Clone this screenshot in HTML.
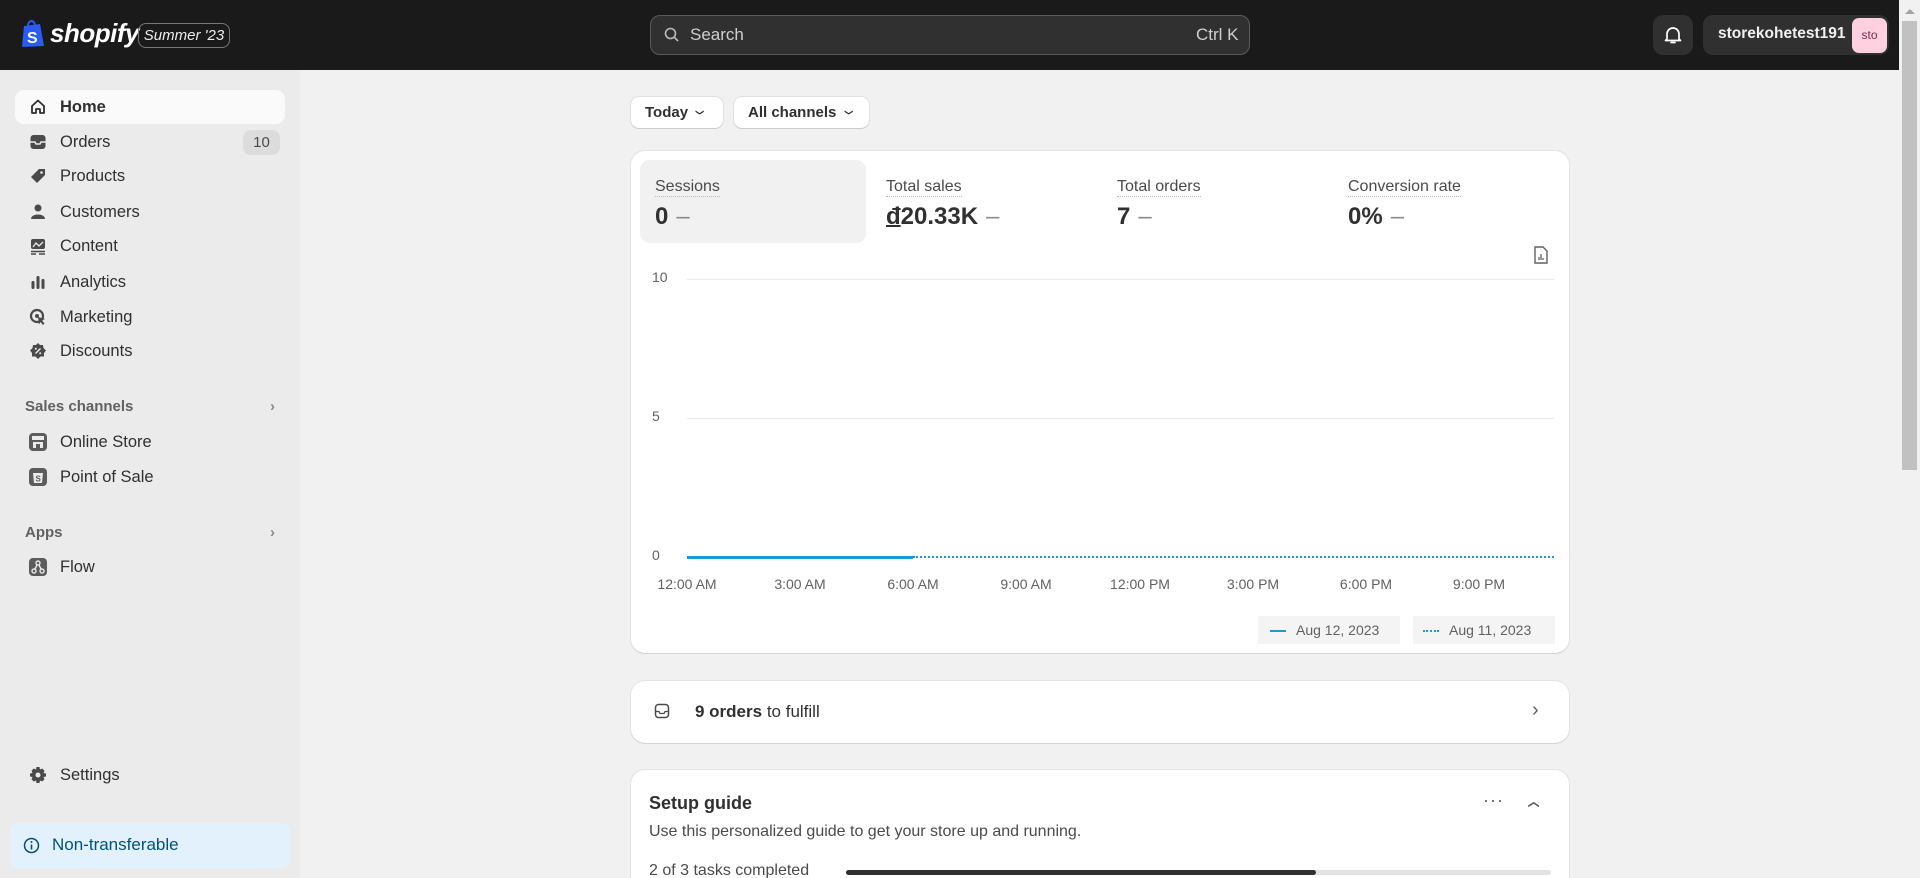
<!DOCTYPE html>
<html style="overflow:hidden;width:1920px;height:878px"><head><meta charset="utf-8"><style>
*{box-sizing:border-box;margin:0;padding:0}
body{width:1920px;height:878px;overflow:hidden;background:#f1f1f1;font-family:"Liberation Sans",sans-serif;color:#303030;position:relative}
.abs{position:absolute}
.top{left:0;top:0;width:1899px;height:70px;background:#1a1a1a}
.side{left:0;top:70px;width:300px;height:808px;background:#ebebeb}
.nav{position:absolute;left:15px;width:270px;height:34px;display:flex;align-items:center;font-size:16.5px;font-weight:bold;color:#303030}
.nav .ic{width:20px;height:20px;margin-left:13px;margin-right:12px;display:flex;align-items:center;justify-content:center}
.sec{position:absolute;left:25px;font-size:15px;font-weight:bold;color:#616161}
.chev{position:absolute;right:0;color:#8a8a8a}
.card{position:absolute;left:631px;width:938px;background:#fff;border-radius:14px;box-shadow:0 1px 0 #d4d4d4,0 0 0 1px #e3e3e3}
.lbl{position:absolute;top:178px;font-size:16px;color:#4a4a4a;border-bottom:1.5px dotted #bbb;line-height:18px}
.val{position:absolute;top:203px;font-size:24px;font-weight:bold;color:#303030}
.val span{color:#8a8a8a;font-weight:normal;margin-left:8px}
.xl{position:absolute;top:576px;font-size:14px;color:#616161;transform:translateX(-50%)}
.yl{position:absolute;left:652px;font-size:14px;color:#616161}
.grid{position:absolute;left:687px;width:867px;height:1px;background:#ebebeb}
</style></head><body>
<div class="abs top"></div>
<svg class="abs" style="left:20px;top:18px" width="26" height="30" viewBox="0 0 26 30"><path d="M4 8 L20 6 L24 28 L2 29 Z" fill="#2a5cf5"/><path d="M8 8 C8 2 14 1 15 7" stroke="#2a5cf5" stroke-width="2" fill="none"/><text x="7" y="25" font-size="16" font-weight="bold" fill="#fff" font-family="Liberation Sans">S</text></svg>
<div class="abs" style="left:50px;top:18px;font-size:26px;font-weight:bold;font-style:italic;color:#fff;letter-spacing:-0.5px">shopify</div>
<div class="abs" style="left:138px;top:23px;width:92px;height:25px;border:1px solid #777;border-radius:8px;color:#eee;font-style:italic;font-size:15px;text-align:center;line-height:23px">Summer '23</div>
<div class="abs" style="left:650px;top:15px;width:600px;height:40px;background:#303030;border:1px solid #5a5a5a;border-radius:10px"></div>
<svg class="abs" style="left:664px;top:27px" width="16" height="16" viewBox="0 0 16 16"><circle cx="6.5" cy="6.5" r="5" stroke="#bbb" stroke-width="1.6" fill="none"/><path d="M10.5 10.5 L14 14" stroke="#bbb" stroke-width="1.6"/></svg>
<div class="abs" style="left:690px;top:25px;font-size:17px;color:#cfcfcf">Search</div>
<div class="abs" style="left:1196px;top:25px;font-size:17px;color:#cfcfcf">Ctrl K</div>
<div class="abs" style="left:1653px;top:15px;width:40px;height:40px;background:#303030;border-radius:10px"></div>
<svg class="abs" style="left:1664px;top:25px" width="18" height="20" viewBox="0 0 18 20"><path d="M3 14 V9 a6 6 0 0 1 12 0 V14 L16.5 15.5 H1.5 Z" stroke="#fff" stroke-width="1.7" fill="none" stroke-linejoin="round"/><path d="M7 17.5 h4" stroke="#fff" stroke-width="1.7" stroke-linecap="round"/></svg>
<div class="abs" style="left:1703px;top:15px;width:186px;height:40px;background:#303030;border-radius:10px"></div>
<div class="abs" style="left:1718px;top:25px;font-size:15.5px;font-weight:bold;color:#f1f1f1">storekohetest191</div>
<div class="abs" style="left:1852px;top:18px;width:35px;height:35px;background:#ffd0e0;border-radius:7px;font-size:12px;color:#7a2a4a;text-align:center;line-height:35px">sto</div>
<div class="abs" style="left:1899px;top:0;width:21px;height:878px;background:#f1f1f1"></div>
<div class="abs" style="left:1905px;top:9px;width:0;height:0;border-left:5px solid transparent;border-right:5px solid transparent;border-bottom:5px solid #a3a3a3"></div>
<div class="abs" style="left:1902px;top:21px;width:15px;height:449px;background:#c1c1c1"></div>

<div class="abs side"></div>
<div class="nav" style="top:90px;background:#fafafa;border-radius:9px"><span class="ic"><svg width="18" height="18" viewBox="0 0 18 18"><path d="M3 8 L9 2.5 L15 8 V15 H11 V11 H7 V15 H3 Z" stroke="#303030" stroke-width="1.8" fill="none" stroke-linejoin="round"/></svg></span>Home</div>
<div class="nav" style="top:125px;font-weight:normal"><span class="ic"><svg width="18" height="18" viewBox="0 0 18 18"><rect x="1.5" y="2" width="15" height="14" rx="3" fill="#4a4a4a"/><path d="M1.5 9 H6 L7 11 H11 L12 9 H16.5" stroke="#ebebeb" stroke-width="1.5" fill="none"/></svg></span>Orders<span style="position:absolute;right:5px;background:#dcdcdc;border-radius:8px;width:37px;height:25px;text-align:center;line-height:25px;font-size:15px;color:#4a4a4a">10</span></div>
<div class="nav" style="top:159px;font-weight:normal"><span class="ic"><svg width="18" height="18" viewBox="0 0 18 18"><path d="M10 2 H16 V8 L8 16 L2 10 Z" fill="#4a4a4a"/><circle cx="12.5" cy="5.5" r="1.3" fill="#ebebeb"/></svg></span>Products</div>
<div class="nav" style="top:195px;font-weight:normal"><span class="ic"><svg width="18" height="18" viewBox="0 0 18 18"><circle cx="9" cy="5" r="3.5" fill="#4a4a4a"/><path d="M2 16 C2 10 16 10 16 16 Z" fill="#4a4a4a"/></svg></span>Customers</div>
<div class="nav" style="top:229px;font-weight:normal"><span class="ic"><svg width="18" height="18" viewBox="0 0 18 18"><rect x="2" y="2" width="14" height="10" rx="2" fill="#4a4a4a"/><path d="M4 10 L7 6 L10 9 L14 5" stroke="#ebebeb" stroke-width="1.3" fill="none"/><path d="M2 14.5 H16 M2 17 H7 M10 17 H16" stroke="#4a4a4a" stroke-width="1.4"/></svg></span>Content</div>
<div class="nav" style="top:265px;font-weight:normal"><span class="ic"><svg width="18" height="18" viewBox="0 0 18 18"><rect x="2.5" y="8" width="3" height="8" rx="1.2" fill="#4a4a4a"/><rect x="7.5" y="3" width="3" height="13" rx="1.2" fill="#4a4a4a"/><rect x="12.5" y="6" width="3" height="10" rx="1.2" fill="#4a4a4a"/></svg></span>Analytics</div>
<div class="nav" style="top:300px;font-weight:normal"><span class="ic"><svg width="18" height="18" viewBox="0 0 18 18"><circle cx="8" cy="8" r="6" stroke="#4a4a4a" stroke-width="2.2" fill="none"/><circle cx="8" cy="8" r="2" fill="#4a4a4a"/><path d="M9 9 L16 11 L13 12.5 L15.5 15.5 L14 17 L11.5 14 L10 16.5 Z" fill="#4a4a4a"/></svg></span>Marketing</div>
<div class="nav" style="top:334px;font-weight:normal"><span class="ic"><svg width="18" height="18" viewBox="0 0 18 18"><path d="M9 1 L11 3 L14 3 L14.5 6 L17 8.5 L15 11 L15 14.5 L11.5 14.5 L9 17 L6.5 14.5 L3 14.5 L3 11 L1 8.5 L3.5 6 L4 3 L7 3 Z" fill="#4a4a4a"/><path d="M6.5 11.5 L11.5 6.5" stroke="#ebebeb" stroke-width="1.4"/><circle cx="6.8" cy="6.8" r="1" fill="#ebebeb"/><circle cx="11.2" cy="11.2" r="1" fill="#ebebeb"/></svg></span>Discounts</div>
<div class="sec" style="top:398px;width:250px">Sales channels<span class="chev">›</span></div>
<div class="nav" style="top:425px;font-weight:normal"><span class="ic"><svg width="20" height="20" viewBox="0 0 20 20"><rect x="1" y="1" width="18" height="18" rx="4" fill="#5c5c5c"/><rect x="4" y="4" width="12" height="4" fill="#ebebeb"/><rect x="5" y="10" width="10" height="6" fill="#ebebeb"/><rect x="8" y="12" width="4" height="4" fill="#5c5c5c"/></svg></span>Online Store</div>
<div class="nav" style="top:460px;font-weight:normal"><span class="ic"><svg width="20" height="20" viewBox="0 0 20 20"><rect x="1" y="1" width="18" height="18" rx="4" fill="#5c5c5c"/><path d="M5 6 H15 L14 16 H6 Z" fill="#ebebeb"/><text x="7.5" y="14.5" font-size="8" font-weight="bold" fill="#5c5c5c" font-family="Liberation Sans">S</text></svg></span>Point of Sale</div>
<div class="sec" style="top:524px;width:250px">Apps<span class="chev">›</span></div>
<div class="nav" style="top:550px;font-weight:normal"><span class="ic"><svg width="20" height="20" viewBox="0 0 20 20"><rect x="1" y="1" width="18" height="18" rx="4" fill="#5c5c5c"/><circle cx="10" cy="6" r="2" stroke="#ebebeb" stroke-width="1.4" fill="none"/><circle cx="6" cy="14" r="2" stroke="#ebebeb" stroke-width="1.4" fill="none"/><circle cx="14" cy="14" r="2" stroke="#ebebeb" stroke-width="1.4" fill="none"/><path d="M9 8 L7 12 M11 8 L13 12" stroke="#ebebeb" stroke-width="1.4"/></svg></span>Flow</div>
<div class="nav" style="top:758px;font-weight:normal"><span class="ic"><svg width="18" height="18" viewBox="0 0 18 18"><path d="M7.5 1 H10.5 L11 3.5 L13.2 2.5 L15.5 4.8 L14.5 7 L17 7.5 V10.5 L14.5 11 L15.5 13.2 L13.2 15.5 L11 14.5 L10.5 17 H7.5 L7 14.5 L4.8 15.5 L2.5 13.2 L3.5 11 L1 10.5 V7.5 L3.5 7 L2.5 4.8 L4.8 2.5 L7 3.5 Z" fill="#4a4a4a"/><circle cx="9" cy="9" r="2.5" fill="#ebebeb"/></svg></span>Settings</div>
<div class="abs" style="left:10px;top:823px;width:280px;height:45px;background:#e3f1fc;border-radius:9px"></div>
<svg class="abs" style="left:23px;top:837px" width="17" height="17" viewBox="0 0 17 17"><circle cx="8.5" cy="8.5" r="7" stroke="#00527c" stroke-width="1.5" fill="none"/><path d="M8.5 7.5 V12.5" stroke="#00527c" stroke-width="1.6"/><circle cx="8.5" cy="5" r="1" fill="#00527c"/></svg>
<div class="abs" style="left:52px;top:835px;font-size:17px;color:#00527c">Non-transferable</div>

<div class="abs" style="left:631px;top:97px;width:92px;height:31px;background:#fff;border-radius:8px;box-shadow:0 1px 0 #ccc,0 0 0 1px #e0e0e0;font-size:15px;font-weight:bold;line-height:31px;padding-left:14px">Today <span style="font-weight:normal;display:inline-block;transform:scaleX(1.4) rotate(90deg);margin-left:6px">›</span></div>
<div class="abs" style="left:734px;top:97px;width:135px;height:31px;background:#fff;border-radius:8px;box-shadow:0 1px 0 #ccc,0 0 0 1px #e0e0e0;font-size:15px;font-weight:bold;line-height:31px;padding-left:14px">All channels <span style="font-weight:normal;display:inline-block;transform:scaleX(1.4) rotate(90deg);margin-left:6px">›</span></div>

<div class="card" style="top:151px;height:502px"></div>
<div class="abs" style="left:640px;top:160px;width:226px;height:83px;background:#f1f1f1;border-radius:10px"></div>
<div class="lbl" style="left:655px">Sessions</div><div class="val" style="left:655px">0<span>–</span></div>
<div class="lbl" style="left:886px">Total sales</div><div class="val" style="left:886px"><u style="text-decoration-thickness:2px">đ</u>20.33K<span>–</span></div>
<div class="lbl" style="left:1117px">Total orders</div><div class="val" style="left:1117px">7<span>–</span></div>
<div class="lbl" style="left:1348px">Conversion rate</div><div class="val" style="left:1348px">0%<span>–</span></div>
<svg class="abs" style="left:1533px;top:246px" width="16" height="19" viewBox="0 0 16 19"><path d="M2 1 H10 L14 5 V17 H2 Z" stroke="#616161" stroke-width="1.4" fill="none"/><path d="M6 14 V11 M8 14 V8 M10 14 V12" stroke="#616161" stroke-width="1.3"/></svg>
<div class="yl" style="top:269px">10</div><div class="grid" style="top:279px"></div>
<div class="yl" style="top:408px">5</div><div class="grid" style="top:418px"></div>
<div class="yl" style="top:547px">0</div>
<div class="abs" style="left:687px;top:556px;width:226px;height:3px;background:#1d9ad6"></div>
<div class="abs" style="left:913px;top:556px;width:641px;height:0;border-top:2px dotted #1d9ad6"></div>
<div class="xl" style="left:687px">12:00 AM</div><div class="xl" style="left:800px">3:00 AM</div><div class="xl" style="left:913px">6:00 AM</div><div class="xl" style="left:1026px">9:00 AM</div><div class="xl" style="left:1140px">12:00 PM</div><div class="xl" style="left:1253px">3:00 PM</div><div class="xl" style="left:1366px">6:00 PM</div><div class="xl" style="left:1479px">9:00 PM</div>
<div class="abs" style="left:1258px;top:616px;width:142px;height:28px;background:#f4f4f4;font-size:14px;color:#616161;line-height:28px;padding-left:12px"><span style="display:inline-block;width:16px;border-top:2px solid #1d9ad6;vertical-align:middle;margin-right:10px"></span>Aug 12, 2023</div>
<div class="abs" style="left:1413px;top:616px;width:142px;height:28px;background:#f4f4f4;font-size:14px;color:#616161;line-height:28px;padding-left:10px"><span style="display:inline-block;width:16px;border-top:2px dotted #1d9ad6;vertical-align:middle;margin-right:10px"></span>Aug 11, 2023</div>

<div class="card" style="top:681px;height:62px"></div>
<svg class="abs" style="left:654px;top:703px" width="16" height="16" viewBox="0 0 16 16"><rect x="1.5" y="1.5" width="13" height="13" rx="3" stroke="#4a4a4a" stroke-width="1.5" fill="none"/><path d="M1.5 8.5 H5 L6 10.5 H10 L11 8.5 H14.5" stroke="#4a4a4a" stroke-width="1.3" fill="none"/></svg>
<div class="abs" style="left:695px;top:702px;font-size:17px"><b>9 orders</b> to fulfill</div>
<div class="abs" style="left:1532px;top:699px;font-size:20px;color:#616161">›</div>

<div class="card" style="top:770px;height:108px;border-bottom-left-radius:0;border-bottom-right-radius:0"></div>
<div class="abs" style="left:649px;top:793px;font-size:18px;font-weight:bold">Setup guide</div>
<div class="abs" style="left:1483px;top:790px;font-size:18px;color:#616161;letter-spacing:1px">···</div>
<div class="abs" style="left:1530px;top:793px;font-size:20px;color:#616161;transform:scaleX(1.4) rotate(-90deg)">›</div>
<div class="abs" style="left:649px;top:823px;font-size:16px;color:#4a4a4a">Use this personalized guide to get your store up and running.</div>
<div class="abs" style="left:649px;top:862px;font-size:16px;color:#4a4a4a">2 of 3 tasks completed</div>
<div class="abs" style="left:846px;top:870px;width:705px;height:5px;background:#e3e3e3;border-radius:3px"></div>
<div class="abs" style="left:846px;top:870px;width:470px;height:5px;background:#303030;border-radius:3px"></div>
</body></html>
